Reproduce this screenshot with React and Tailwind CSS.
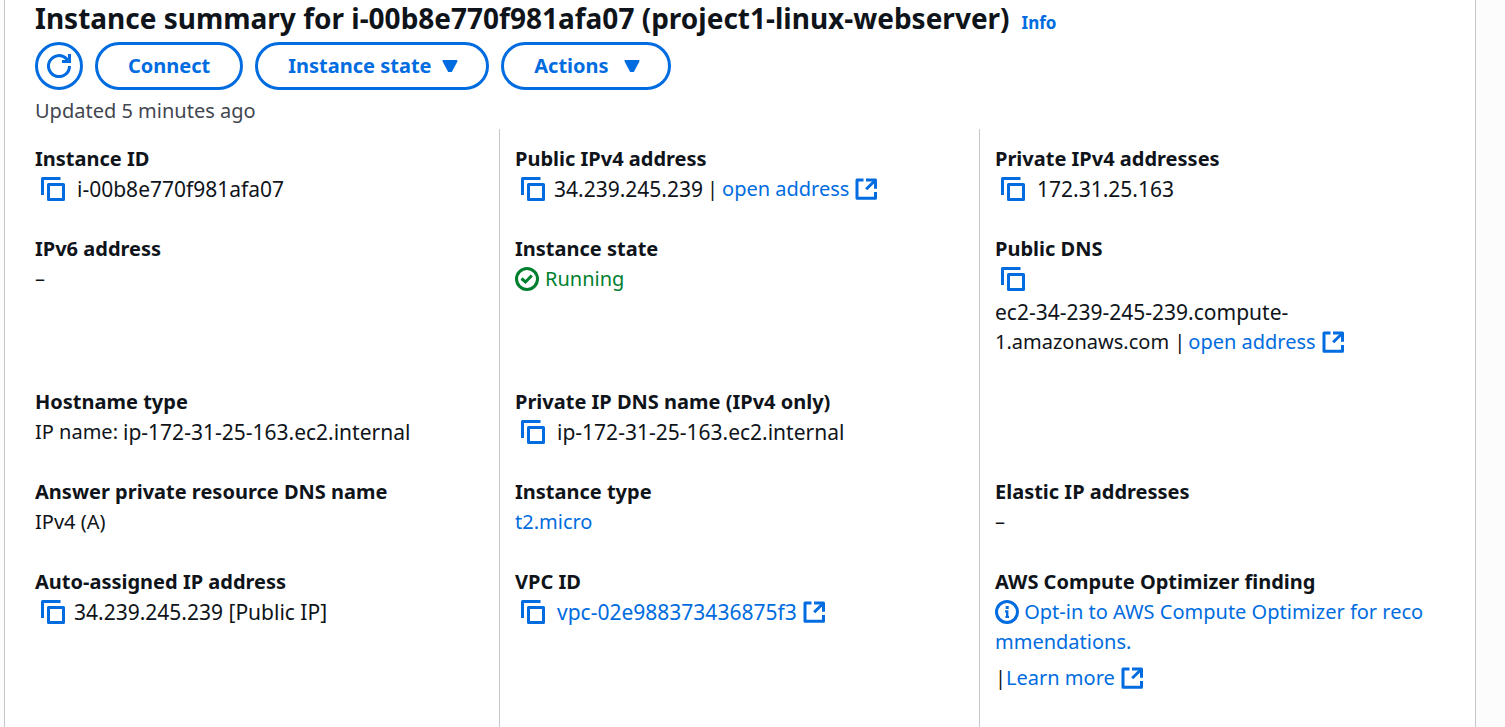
function CopyIcon() {
  return (
    <svg viewBox="0 0 24 24" className="size-6" fill="none" stroke="currentColor" strokeWidth="3" aria-hidden="true">
      <path d="M1.5 18V1.5H19.5" strokeLinejoin="round" />
      <path d="M7.5 7.5H22.5V22.5H7.5Z" strokeLinejoin="round" />
    </svg>
  );
}

function ExternalIcon() {
  return (
    <svg viewBox="0 0 24 24" className="size-6 shrink-0" fill="none" stroke="currentColor" strokeWidth="3" aria-hidden="true">
      <path d="M9.5 3H3V21.2H21.5V15" strokeLinejoin="round" />
      <path d="M12 3H21.5V11.8" strokeLinejoin="round" />
      <path d="M12.2 12.2L21 3.5" />
    </svg>
  );
}

function RefreshIcon() {
  return (
    <svg viewBox="0 0 24 24" className="size-6" fill="none" stroke="currentColor" strokeWidth="3" aria-hidden="true">
      <path d="M22.5 12A10.5 10.5 0 1 1 19.4 4.6L22 7" />
      <path d="M22.5 0V7.5H15" />
    </svg>
  );
}

function Caret() {
  return (
    <svg viewBox="0 0 24 24" className="size-6" fill="currentColor" stroke="currentColor" strokeWidth="2" strokeLinejoin="round" aria-hidden="true">
      <path d="M5.5 7H18.5L13.2 17H10.8Z" />
    </svg>
  );
}

function CheckIcon() {
  return (
    <svg viewBox="0 0 24 24" className="size-6" fill="none" stroke="currentColor" strokeWidth="3" aria-hidden="true">
      <circle cx="12" cy="12" r="10.5" />
      <path d="M6.5 11.5L10.5 15L16.8 8.5" />
    </svg>
  );
}

function InfoIcon() {
  return (
    <svg viewBox="0 0 24 24" className="inline size-6 align-[-5px]" fill="none" stroke="currentColor" strokeWidth="3" aria-hidden="true">
      <circle cx="12" cy="12" r="10.5" />
      <path d="M12.2 6V9" />
      <path d="M10 11.4H12.2V18" strokeWidth="2.4" />
      <path d="M10.4 17H14" strokeWidth="2" />
    </svg>
  );
}

function Copy({ what }) {
  return (
    <button type="button" aria-label={`Copy ${what}`} className="ml-[6px] text-[#006ce0]">
      <CopyIcon />
    </button>
  );
}

function Link({ children, external }) {
  return (
    <a href="#" className="inline-flex items-center gap-[5px] text-[#006ce0]">
      {children}
      {external && <ExternalIcon />}
    </a>
  );
}

function Id({ children }) {
  return <span className="text-[21px] leading-7">{children}</span>;
}

function Field({ label, divider, children }) {
  return (
    <div className={divider ? "border-r border-[#c6c6cd] py-[15px] pl-[15px] pr-6" : "py-[15px] pl-[15px] pr-6"}>
      <dt className="font-bold">{label}</dt>
      <dd>{children}</dd>
    </div>
  );
}

function MenuButton({ width, children }) {
  return (
    <button type="button" className={`${width} flex h-12 items-center justify-between rounded-full border-3 border-[#006ce0] pr-6 pl-[30px] font-bold whitespace-nowrap text-[#006ce0]`}>
      {children}
      <Caret />
    </button>
  );
}

export default function App() {
  return (
    <div className="flex min-h-screen bg-[#fcfcfd] pr-[29px] pl-1 font-['Noto_Sans','Open_Sans',sans-serif] text-[20px] leading-[30px] text-[#0f141a]">
      <main className="flex flex-1 flex-col border-x border-[#c6c6cd] bg-white px-[15px]">
        <header className="px-[15px]">
          <div className="flex items-baseline gap-3">
            <h1 className="text-[28px] leading-[36px] font-bold whitespace-nowrap">
              Instance summary for i-00b8e770f981afa07 (project1-linux-webserver)
            </h1>
            <a href="#" className="text-[17px] leading-[36px] font-bold text-[#006ce0]">Info</a>
          </div>
          <div className="mt-px flex gap-3">
            <button type="button" aria-label="Refresh" className="grid size-12 place-items-center rounded-full border-3 border-[#006ce0] text-[#006ce0]">
              <RefreshIcon />
            </button>
            <button type="button" className="h-12 rounded-full border-3 border-[#006ce0] px-[30px] font-bold text-[#006ce0]">
              Connect
            </button>
            <MenuButton width="w-[234px]">Instance state</MenuButton>
            <MenuButton width="w-[170px]">Actions</MenuButton>
          </div>
          <p className="mt-[6px] text-[#424650]">Updated 5 minutes ago</p>
        </header>

        <dl className="mt-[3px] grid flex-1 grid-cols-3 grid-rows-[auto_auto_auto_auto_1fr]">
          <Field label="Instance ID" divider>
            <div className="flex h-[30px] items-center gap-3"><Copy what="instance ID" /><Id>i-00b8e770f981afa07</Id></div>
          </Field>
          <Field label="Public IPv4 address" divider>
            <div className="flex h-[30px] items-center gap-[9px]">
              <Copy what="public IPv4 address" />
              <span className="flex items-center gap-1"><Id>34.239.245.239</Id> | <Link external>open address</Link></span>
            </div>
          </Field>
          <Field label="Private IPv4 addresses">
            <div className="flex h-[30px] items-center gap-3"><Copy what="private IPv4 address" /><Id>172.31.25.163</Id></div>
          </Field>

          <Field label="IPv6 address" divider>–</Field>
          <Field label="Instance state" divider>
            <div className="flex h-[30px] items-center gap-[6px] text-[#00802f]"><CheckIcon />Running</div>
          </Field>
          <Field label="Public DNS">
            <div className="mb-[3px] flex h-[30px] items-center"><Copy what="public DNS" /></div>
            <div className="flex h-[30px] items-center"><Id>ec2-34-239-245-239.compute-</Id></div>
            <div className="flex gap-[3px]">1.amazonaws.com | <Link external>open address</Link></div>
          </Field>

          <Field label="Hostname type" divider>
            <div className="flex h-[30px] items-center gap-[5px]">IP name: <Id>ip-172-31-25-163.ec2.internal</Id></div>
          </Field>
          <Field label="Private IP DNS name (IPv4 only)" divider>
            <div className="flex h-[30px] items-center gap-3"><Copy what="private IP DNS name" /><Id>ip-172-31-25-163.ec2.internal</Id></div>
          </Field>
          <div />

          <Field label="Answer private resource DNS name" divider>IPv4 (A)</Field>
          <Field label="Instance type" divider><Link>t2.micro</Link></Field>
          <Field label="Elastic IP addresses">–</Field>

          <Field label="Auto-assigned IP address" divider>
            <div className="flex h-[30px] items-center gap-[9px]"><Copy what="auto-assigned IP address" /><Id>34.239.245.239 [Public IP]</Id></div>
          </Field>
          <Field label="VPC ID" divider>
            <div className="flex h-[30px] items-center gap-3"><Copy what="VPC ID" /><Link external><Id>vpc-02e988373436875f3</Id></Link></div>
          </Field>
          <Field label="AWS Compute Optimizer finding">
            <a href="#" className="block break-all text-[#006ce0]">
              <InfoIcon /> Opt-in to AWS Compute Optimizer for recommendations.
            </a>
            <div className="mt-[6px] flex">| <Link external>Learn more</Link></div>
          </Field>
        </dl>
      </main>
    </div>
  );
}
